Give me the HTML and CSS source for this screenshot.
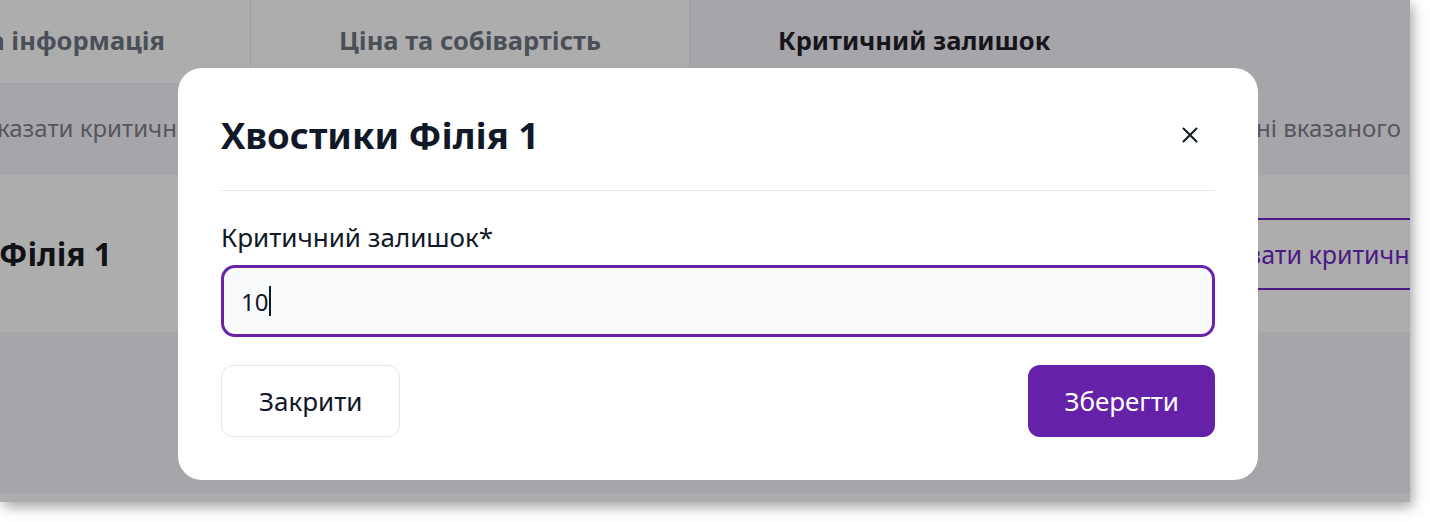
FILE: index.html
```html
<!DOCTYPE html>
<html lang="uk">
<head>
<meta charset="utf-8">
<title>Критичний залишок</title>
<link rel="stylesheet" href="styles.css">
</head>
<body>
<div class="screen">
  <div class="page">
    <nav class="tabs">
      <div class="tab tab-first"><span>а інформація</span></div>
      <div class="tab">Ціна та собівартість</div>
      <div class="tab tab-active">Критичний залишок</div>
      <div class="tab-rest"></div>
    </nav>
    <div class="hint-row">
      <span class="hint-left">казати критичний залишок для кожної філії, сповіщення надійде при</span>
      <span class="hint-right">ні вказаного</span>
    </div>
    <div class="branch-row">
      <span class="branch-name">Філія 1</span>
      <span class="branch-action">Вказати критичний залишок</span>
    </div>
    <div class="page-fill"></div>
    <div class="page-foot"></div>
  </div>

  <div class="modal" role="dialog">
    <header class="modal-head">
      <h2 class="modal-title">Хвостики Філія 1</h2>
      <button class="modal-close" aria-label="Закрити">
        <svg width="16" height="16" viewBox="0 0 16 16"><path d="M1.5 1.5 L14.5 14.5 M14.5 1.5 L1.5 14.5" stroke="#111827" stroke-width="2" stroke-linecap="round" fill="none"/></svg>
      </button>
    </header>
    <div class="modal-body">
      <label class="field-label" for="crit">Критичний залишок*</label>
      <div class="field-input"><span class="field-value">10</span><span class="caret"></span></div>
    </div>
    <footer class="modal-foot">
      <button class="btn btn-ghost">Закрити</button>
      <button class="btn btn-primary">Зберегти</button>
    </footer>
  </div>
</div>
</body>
</html>
```
FILE: styles.css
```css
* { box-sizing: border-box; }
html, body { margin: 0; padding: 0; background: #ffffff; }
body {
  font-family: "Noto Sans", "Open Sans", sans-serif;
  width: 1430px;
  height: 522px;
  overflow: hidden;
}
.screen {
  position: relative;
  width: 1410px;
  height: 502px;
  overflow: hidden;
  background: #a6a5aa;
  box-shadow: 3px 5px 12px rgba(0, 0, 0, 0.35);
}
.page {
  display: flex;
  flex-direction: column;
  height: 100%;
}
.tabs {
  display: flex;
  height: 84px;
  flex: none;
}
.tab {
  display: flex;
  align-items: center;
  justify-content: center;
  padding: 0 88px 4px;
  background: #adadad;
  border-right: 1px solid #a0a0a2;
  border-bottom: 1px solid #a2a2a4;
  font-size: 25.5px;
  font-weight: 700;
  color: #4b4f58;
  white-space: nowrap;
}
.tab-first {
  width: 251px;
  justify-content: flex-end;
  padding-left: 0;
  padding-right: 85px;
  overflow: hidden;
}
.tab-first span { flex: none; }
.tab-active {
  background: #a6a5aa;
  color: #15151b;
  border-bottom-color: #a6a5aa;
}
.tab-rest { flex: 1; }
.hint-row {
  display: flex;
  justify-content: space-between;
  align-items: center;
  height: 91px;
  padding-bottom: 4px;
  flex: none;
  font-size: 24px;
  color: #56575d;
  white-space: nowrap;
  overflow: hidden;
}
.hint-left { margin-left: -3px; }
.hint-right { width: 154px; overflow: hidden; flex: none; }
.branch-row {
  display: flex;
  justify-content: space-between;
  align-items: center;
  height: 157px;
  flex: none;
  background: #adadad;
  overflow: hidden;
  white-space: nowrap;
}
.branch-name {
  font-size: 31.5px;
  font-weight: 700;
  color: #111116;
  margin-left: -1px;
}
.branch-action {
  flex: none;
  width: 240px;
  height: 72px;
  display: flex;
  align-items: center;
  margin-right: -40px;
  border-top: 2px solid #4a1a85;
  border-bottom: 2px solid #4a1a85;
  font-size: 25px;
  color: #4a1a85;
  overflow: hidden;
  text-indent: -4px;
}
.page-fill { flex: 1; }
.page-foot { height: 9px; background: #adadad; flex: none; }

.modal {
  position: absolute;
  left: 178px;
  top: 68px;
  width: 1080px;
  height: 412px;
  background: #ffffff;
  border-radius: 24px;
  padding: 43px;
  display: flex;
  flex-direction: column;
}
.modal-head {
  display: flex;
  align-items: center;
  justify-content: space-between;
  padding-bottom: 31px;
  border-bottom: 1px solid #e5e7eb;
}
.modal-title {
  margin: 0;
  font-size: 36.5px;
  line-height: 48px;
  font-weight: 700;
  color: #111827;
}
.modal-close {
  border: 0;
  background: none;
  padding: 0;
  margin-right: 17px;
  width: 16px;
  height: 16px;
  display: flex;
}
.modal-body {
  display: flex;
  flex-direction: column;
  padding-top: 28px;
}
.field-label {
  font-size: 26px;
  line-height: 36px;
  color: #111827;
  margin-bottom: 10px;
}
.field-input {
  height: 72px;
  border: 3px solid #6b21a8;
  border-radius: 14px;
  background: #f8fafc;
  display: flex;
  align-items: center;
  padding-left: 17px;
  font-size: 24px;
  color: #111827;
}
.caret {
  width: 2px;
  height: 30px;
  background: #111827;
  margin-left: 1px;
}
.modal-foot {
  display: flex;
  justify-content: space-between;
  margin-top: 28px;
}
.btn {
  height: 72px;
  border-radius: 12px;
  font-family: inherit;
  font-size: 26px;
  padding: 0 37px;
  cursor: pointer;
}
.btn-ghost {
  background: #ffffff;
  border: 1px solid #e5e7eb;
  color: #111827;
}
.btn-primary {
  background: #6621a9;
  border: 0;
  color: #ffffff;
  padding: 0 36px;
}
```
